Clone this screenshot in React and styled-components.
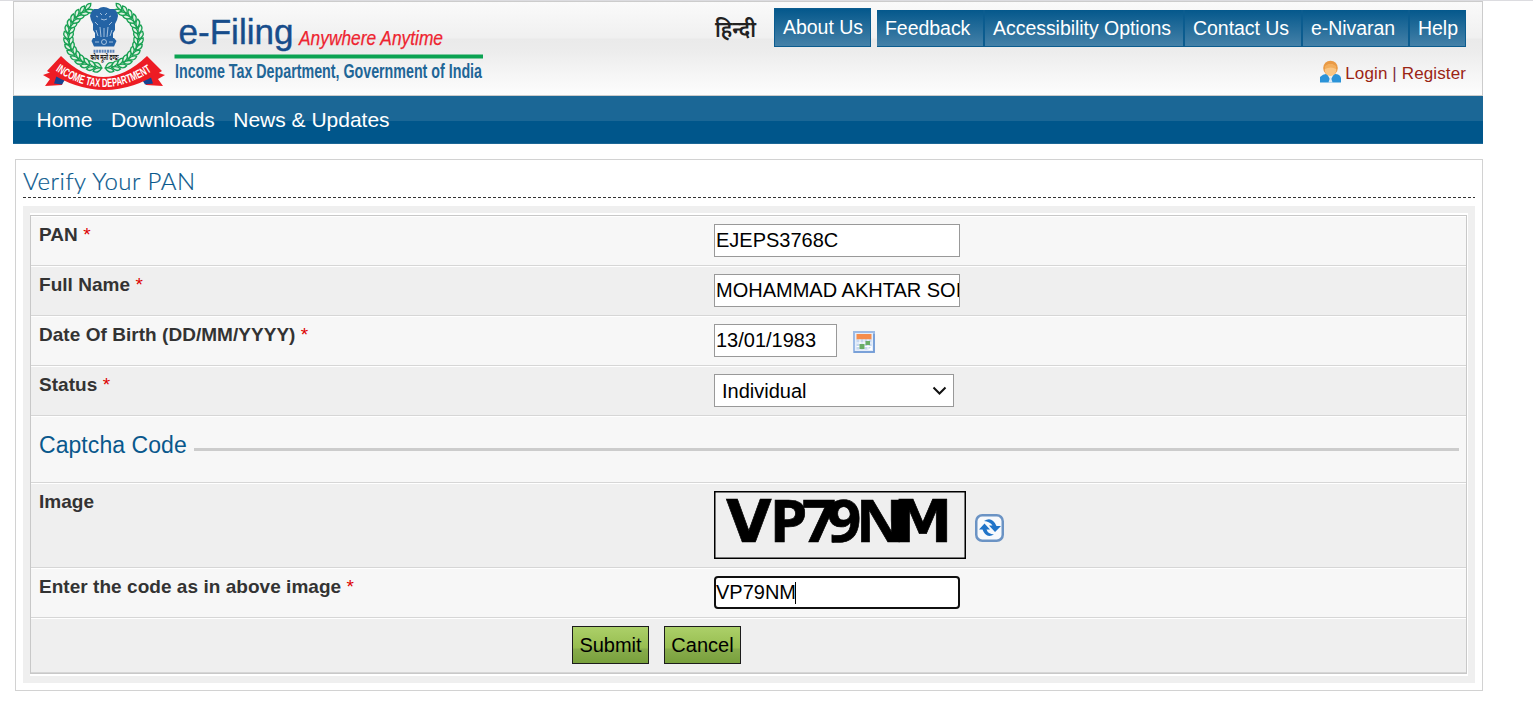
import React from "react";
import styled, { createGlobalStyle } from "styled-components";

const Global = createGlobalStyle`
  * { box-sizing: border-box; }
  body {
    margin: 0;
    background: #fff;
    font-family: "Liberation Sans", Arial, sans-serif;
    color: #333;
    border-top: 1px solid #dcdce0;
  }
`;

const Page = styled.div`
  width: 1470px;
  margin-left: 13px;
`;

const Header = styled.header`
  display: flex;
  justify-content: space-between;
  height: 95px;
  border: 1px solid #ccc;
  padding: 0 16px 0 26px;
  background: linear-gradient(#fafafa 0, #f0f0f0 36px, #eaeaea 37px, #ececec 48px, #fdfdfd 93px);
`;

const Logo = styled.svg`
  display: block;
  flex: none;
`;

const HeaderSide = styled.div`
  display: flex;
  flex-direction: column;
  align-items: flex-end;
  padding-top: 6px;
`;

const TopBar = styled.div`
  display: flex;
  align-items: flex-end;
  height: 39px;
`;

const Hindi = styled.svg`
  display: block;
  margin-right: 14px;
`;

const TopLink = styled.a`
  display: block;
  width: ${(p) => p.$w}px;
  height: ${(p) => (p.$single ? 39 : 37)}px;
  padding-left: 8px;
  line-height: 37px;
  font-size: 19.5px;
  letter-spacing: -0.04px;
  white-space: nowrap;
  color: #fff;
  background: linear-gradient(#04588c, #4581a8);
  border: 0 solid #0b5c8f;
  border-width: ${(p) => (p.$single ? "1px" : p.$last ? "0 1px 1px 0" : "0 2px 1px 0")};
`;

const TopMenu = styled.nav`
  display: flex;
  margin-left: 6px;
`;

const Account = styled.div`
  display: flex;
  align-items: center;
  margin-top: 14px;
  height: 26px;
  font-size: 17px;
  letter-spacing: 0.12px;
  color: #9b2414;
  white-space: nowrap;
  svg { margin: -5px 4px 0 0; }
  i { font-style: normal; color: #7d3040; }
`;

const MainNav = styled.nav`
  display: flex;
  gap: 18.4px;
  height: 48px;
  padding-left: 23.5px;
  line-height: 48px;
  font-size: 21px;
  color: #fff;
  background: linear-gradient(#1b6796 25px, #00568b 25px, #00568b 47px, #1b6796 47px);
`;

const Panel = styled.main`
  margin: 15px 0 0 2px;
  height: 532px;
  border: 1px solid #d2d2d2;
  padding: 0 7px;
`;

const Title = styled.h1`
  margin: 0 0 8px;
  height: 38px;
  font: 300 24px/42px Lato, "Open Sans", sans-serif;
  letter-spacing: 0.5px;
  -webkit-text-stroke: 0.2px #09588c;
  color: #09588c;
  background: repeating-linear-gradient(90deg, #333 0 3px, #fff 3px 5px) bottom / 100% 1px no-repeat;
`;

const Frame = styled.div`
  padding: 7px;
  background: #efefef;
`;

const FrameInner = styled.div`
  padding: 2px 1px 2px 0;
  background: #fff;
`;

const Form = styled.div`
  border: 1px solid #c8c8c8;
`;

const Row = styled.div`
  display: grid;
  grid-template-columns: 675px 1fr;
  align-items: start;
  height: ${(p) => p.$h || 50}px;
  padding: 7px 8px 0;
  background: ${(p) => (p.$dark ? "#efefef" : "#f7f7f7")};
  border-top: 1px solid #fff;
  border-bottom: 1px solid #d6d6d6;
`;

const Label = styled.label`
  font-weight: bold;
  font-size: 19px;
  line-height: 22px;
  letter-spacing: 0.04px;
  color: #333;
  span { color: #d00; font-weight: normal; }
`;

const Controls = styled.div`
  display: flex;
  align-items: center;
`;

const Field = styled.div`
  display: flex;
  align-items: center;
  width: ${(p) => p.$w || 246}px;
  height: 33px;
  padding: 0 1px 1px;
  overflow: hidden;
  white-space: nowrap;
  font-size: 20px;
  color: #000;
  background: #fff;
  border: 1px solid #999;
  ${(p) => p.$focus && "border: 2px solid #101010; border-radius: 4px; padding: 0;"}
`;

const Caret = styled.span`
  width: 1px;
  height: 22px;
  margin-left: -1px;
  background: #000;
`;

const SelectBox = styled(Field)`
  justify-content: space-between;
  padding: 1px 6px 0 7px;
  svg { margin-bottom: 1px; }
`;

const Calendar = styled.svg`
  display: block;
  margin: 3px 0 0 16px;
`;

const Captcha = styled.svg`
  display: block;
`;

const Refresh = styled.svg`
  display: block;
  margin: 6px 0 0 9px;
`;

const Section = styled.div`
  display: flex;
  align-items: center;
  grid-column: 1 / -1;
  height: 42px;
  font-size: 23px;
  letter-spacing: 0.06px;
  color: #09588c;
  &::after {
    content: "";
    flex: 1;
    height: 3px;
    margin: 8px -1px 0 7px;
    background: #ccc;
  }
`;

const Actions = styled.div`
  display: flex;
  gap: 15px;
  padding-left: 533px;
  grid-column: 1 / -1;
`;

const Button = styled.button`
  width: 77px;
  height: 38px;
  padding: 0;
  font: 20px "Liberation Sans", Arial, sans-serif;
  color: #000;
  border: 1px solid #1c1c1c;
  background: linear-gradient(#acd069, #97bd50 21px, #88ac4c 22px, #78a03c);
`;

/* Wreath leaves in pairs along both sides of an open ellipse */
const leaves = [];
for (let i = 0; i < 15; i++) {
  const a = ((98 + i * 10.4) * Math.PI) / 180;
  for (const side of [1, -1]) {
    const x = 103.5 + side * Math.cos(a) * 35;
    const y = 37 + Math.sin(a) * 31;
    const r = (Math.atan2(Math.cos(a) * 31, side * Math.sin(a) * -35) * 180) / Math.PI;
    leaves.push({ x, y, r });
  }
}

const Emblem = () => (
  <g>
    {leaves.map((l, i) => (
      <g key={i} transform={`translate(${l.x} ${l.y}) rotate(${l.r})`} fill="#dff0e2" stroke="#17a052" strokeWidth="1.3">
        <path d="M-3 0Q0 -6.500 5 -4.200Q3.500 0 -3 0Z" />
        <path d="M-3 0Q0 6.500 5 4.200Q3.500 0 -3 0Z" />
      </g>
    ))}
    <g fill="#2463a5">
      <path d="M98 9q5-4 12 0l4 0q4 3 4 7l-1 4-2 4 0 6-2 3 0 5H95l0-5-2-3 0-6-2-4-1-4q1-5 4-7z" />
      <path d="M93 38h21l2.500 3-2.500 5.500H94l-2.500-5.500z" />
    </g>
    <g stroke="#c5d8ec" fill="none" strokeWidth="0.8">
      <path d="M100 13l2 2m5-2l-2 2M96 16l2 1m13-1l-2 1M101 19q3 2 6 0M95 22l3 3m14-3l-3 3M100 27l1 10m7-10l-1 10M104 28v9M96 30l2 6m14-6l-2 6" />
      <circle cx="104" cy="42" r="2.500" /><path d="M95 42h4m10 0h4" />
    </g>
    <path d="M93.500 50.500h21M93.500 52h21" stroke="#5c85bb" strokeWidth="1.500" strokeDasharray="2 .7" />
    <text x="90.500" y="60" fontSize="7.500" fontWeight="bold" textLength="28" lengthAdjust="spacingAndGlyphs" fill="#222" fontFamily="Noto Sans Devanagari, Noto Sans, sans-serif">कोष मूलो दण्डः</text>
    <path d="M54 71L43 75l7 4-5 7 17-1 2-8zM153 71l12 4-7 4 5 7-17-1-2-8z" fill="#ed1c24" />
    <path d="M54 83.500l3-9 8 5-3 5zM153 83.500l-3-9-8 5 3 5z" fill="#154391" />
    <path d="M61 56Q103 98 147 56L162 71Q105 109 47 71Z" fill="#ed1c24" />
    <path id="ribbonLine" d="M55.500 70.500Q104 104 154 69.500" fill="none" />
    <text fontFamily="Liberation Sans Narrow, Liberation Sans, sans-serif" fontWeight="bold" fontSize="12" fill="#fff">
      <textPath href="#ribbonLine" textLength="103" lengthAdjust="spacingAndGlyphs">INCOME TAX DEPARTMENT</textPath>
    </text>
  </g>
);

const Brand = () => (
  <Logo width="450" height="93" viewBox="40 2 450 93" fontFamily="Liberation Sans, Arial, sans-serif">
    <Emblem />
    <text x="178.500" y="44.300" fontSize="35" fill="#174d8b" stroke="#174d8b" strokeWidth=".4" textLength="115" lengthAdjust="spacingAndGlyphs">e-Filing</text>
    <text x="299" y="44.500" fontSize="20.500" fontStyle="italic" fill="#ee2430" stroke="#ee2430" strokeWidth=".25" textLength="144" lengthAdjust="spacingAndGlyphs">Anywhere Anytime</text>
    <path d="M174.500 56.500H483" stroke="#0ba352" strokeWidth="4" />
    <text x="175" y="78" fontSize="20" fontWeight="bold" fill="#1f6697" textLength="307" lengthAdjust="spacingAndGlyphs">Income Tax Department, Government of India</text>
  </Logo>
);

const UserIcon = () => (
  <svg width="21" height="23" viewBox="0 0 21 23">
    <path d="M0 22.500V17q3-3 6-3h9q5 0 6 4v4.500z" fill="#2b93d8" />
    <path d="M7 14l3.500 6L14 14z" fill="#f5f0ea" />
    <path d="M10.500 16l-2 6.500h4z" fill="#ddeaf5" />
    <circle cx="10.500" cy="8" r="7.300" fill="#e99a45" />
    <ellipse cx="10.500" cy="10" rx="5.800" ry="6" fill="#f9c583" />
    <path d="M5 6q5-4 11 0v3q-5-3-11 0z" fill="#f2ad5b" />
  </svg>
);

const CalendarIcon = () => (
  <Calendar width="22" height="22" viewBox="0 0 22 22">
    <rect x="1" y="1" width="20" height="20" fill="#e6eefa" stroke="#9dbbe6" strokeWidth="2" />
    <path d="M1 21h20V3" fill="none" stroke="#6f99d3" strokeWidth="1.500" />
    <rect x="3.500" y="3" width="15" height="5.500" fill="#f58d4d" />
    <rect x="3.500" y="8.500" width="15" height="10" fill="#c5d7f0" />
    <path d="M3.500 12h15M3.500 15.500h15M7 8.500v10M11 8.500v10M15 8.500v10" stroke="#fff" />
    <path d="M12.500 10h4.500v4h-4.500zM6.500 13h5v5h-5z" fill="#69ad68" />
    <path d="M15 19l4-4v4z" fill="#fff" />
  </Calendar>
);

const RefreshIcon = () => (
  <Refresh width="29" height="28" viewBox="0 0 29 28">
    <rect x="1.250" y="1.250" width="26.500" height="25.500" rx="6" fill="#f7f9fc" stroke="#6b93c4" strokeWidth="2.500" />
    <path d="M9 7Q17 2 21.500 12H26L20 18 14 11.500h3.500Q15 7.500 9 7Z" fill="#1f73c8" />
    <path d="M19 20.500Q11 25 7.500 15.500H4L9.500 9.500 15 15.500h-3.500Q13 20 19 20.500Z" fill="#1f73c8" />
  </Refresh>
);

const CaptchaImage = () => (
  <Captcha width="252" height="68" viewBox="714 491 252 68">
    <rect x="714.750" y="491.750" width="250.500" height="66.500" fill="#efefef" stroke="#000" strokeWidth="1.500" />
    <text y="542" fontSize="60" fontWeight="bold" fontFamily="Noto Sans, sans-serif" stroke="#000" strokeWidth=".7">
      <tspan x="726" fontFamily="DejaVu Sans" fontSize="59">V</tspan>
      <tspan x="770">P</tspan>
      <tspan x="802">7</tspan>
      <tspan x="827">9</tspan>
      <tspan x="856">N</tspan>
      <tspan x="893.500" fontFamily="DejaVu Sans" fontSize="59">M</tspan>
    </text>
  </Captcha>
);

const menu = [
  ["Feedback", 108],
  ["Accessibility Options", 200],
  ["Contact Us", 118],
  ["e-Nivaran", 107],
  ["Help", 56],
];

const FieldLabel = ({ children, required = true }) => (
  <Label>{children}{required && <span> *</span>}</Label>
);

export default function App() {
  return (
    <>
      <Global />
      <Page>
        <Header>
          <Brand />
          <HeaderSide>
            <TopBar>
              <Hindi width="46" height="36" viewBox="0 0 46 36">
                <text x="1" y="26" fontSize="22" fontWeight="600" fill="#222" textLength="41" lengthAdjust="spacingAndGlyphs" fontFamily="Noto Sans Devanagari, Noto Sans, sans-serif">हिन्दी</text>
              </Hindi>
              <TopLink $w={97} $single>About Us</TopLink>
              <TopMenu>
                {menu.map(([t, w], i) => (
                  <TopLink key={t} $w={w} $last={i === menu.length - 1}>{t}</TopLink>
                ))}
              </TopMenu>
            </TopBar>
            <Account><UserIcon /><span>Login <i>|</i> Register</span></Account>
          </HeaderSide>
        </Header>
        <MainNav><span>Home</span><span>Downloads</span><span>News &amp; Updates</span></MainNav>
        <Panel>
          <Title>Verify Your PAN</Title>
          <Frame><FrameInner><Form>
            <Row><FieldLabel>PAN</FieldLabel><Field>EJEPS3768C</Field></Row>
            <Row $dark><FieldLabel>Full Name</FieldLabel><Field>MOHAMMAD AKHTAR SOI</Field></Row>
            <Row>
              <FieldLabel>Date Of Birth (DD/MM/YYYY)</FieldLabel>
              <Controls><Field $w={123}>13/01/1983</Field><CalendarIcon /></Controls>
            </Row>
            <Row $dark>
              <FieldLabel>Status</FieldLabel>
              <SelectBox $w={240}>
                Individual
                <svg width="15" height="10" viewBox="0 0 15 10"><path d="M1.500 1.500l6 6 6-6" fill="none" stroke="#111" strokeWidth="2" /></svg>
              </SelectBox>
            </Row>
            <Row $h={67}><Section>Captcha Code</Section></Row>
            <Row $h={85} $dark>
              <FieldLabel required={false}>Image</FieldLabel>
              <Controls><CaptchaImage /><RefreshIcon /></Controls>
            </Row>
            <Row><FieldLabel>Enter the code as in above image</FieldLabel><Field $focus>VP79NM<Caret /></Field></Row>
            <Row $h={55} $dark><Actions><Button>Submit</Button><Button>Cancel</Button></Actions></Row>
          </Form></FrameInner></Frame>
        </Panel>
      </Page>
    </>
  );
}
